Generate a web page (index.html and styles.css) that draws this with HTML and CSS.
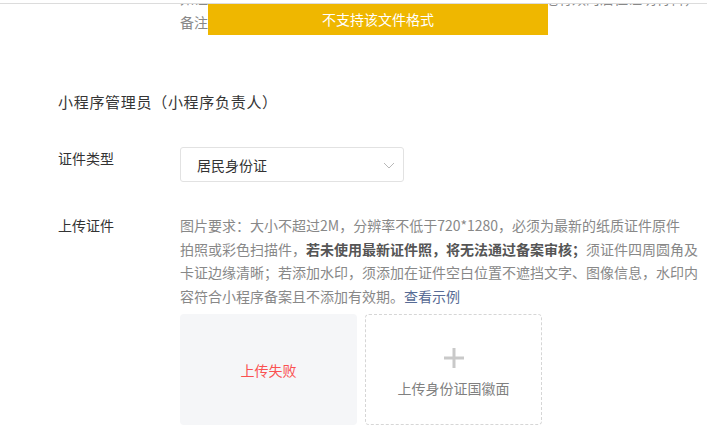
FILE: index.html
```html
<!DOCTYPE html>
<html>
<head>
<meta charset="utf-8">
<link rel="stylesheet" href="styles.css">
</head>
<body>
    <div class="topbar"></div>
    <div class="toast">不支持该文件格式</div>

    <div id="page">
        <p class="note">
            如证件上的地址与实际居住地址不一致，请上传居住证或其他有效的居住证明材料，<br>
            备注：如有其他需要说明的情况请在此处填写补充说明
        </p>

        <h2 class="section-title">小程序管理员（小程序负责人）</h2>

        <div class="form-row">
            <label class="form-label">证件类型</label>
            <div class="form-field">
                <div class="select">
                    <span>居民身份证</span>
                    <svg class="chevron" width="12" height="7" viewBox="0 0 12 7">
                        <path d="M1 1 L6 6 L11 1" fill="none" stroke="#b8b8b8" stroke-width="1" />
                    </svg>
                </div>
            </div>
        </div>

        <div class="form-row upload-row">
            <label class="form-label">上传证件</label>
            <div class="form-field">
                <p class="tips">
                    图片要求：大小不超过2M，分辨率不低于720*1280，必须为最新的纸质证件原件<br>
                    拍照或彩色扫描件，<b>若未使用最新证件照，将无法通过备案审核；</b>须证件四周圆角及<br>
                    卡证边缘清晰；若添加水印，须添加在证件空白位置不遮挡文字、图像信息，水印内<br>
                    容符合小程序备案且不添加有效期。<a href="#" class="link">查看示例</a>
                </p>
                <div class="uploads">
                    <div class="upload-box failed">上传失败</div>
                    <div class="upload-box empty">
                        <svg width="20" height="20" viewBox="0 0 20 20">
                            <rect x="0" y="8.5" width="20" height="3" fill="#c9c9c9" />
                            <rect x="8.5" y="0" width="3" height="20" fill="#c9c9c9" />
                        </svg>
                        <span class="upload-text">上传身份证国徽面</span>
                    </div>
                </div>
            </div>
        </div>
    </div>
</body>
</html>
```

FILE: styles.css
```css
body {
    margin: 0;
    background: #fff;
    font-family: "Noto Sans CJK SC", "Noto Sans", sans-serif;
    color: #333;
    overflow: hidden;
}
.topbar {
    position: fixed;
    top: 0;
    left: 0;
    right: 0;
    height: 3px;
    background: #fff;
    border-bottom: 1px solid #dcdcdc;
    z-index: 2;
}
.toast {
    position: fixed;
    top: 4px;
    left: 208px;
    width: 340px;
    height: 31px;
    line-height: 31px;
    background: #efb700;
    color: #fff;
    font-size: 14px;
    text-align: center;
    z-index: 3;
}
#page {
    padding-left: 58px;
}
.note {
    margin: -13px 0 0 122px;
    font-size: 14px;
    line-height: 23.5px;
    color: #888;
    white-space: nowrap;
}
.section-title {
    margin: 56px 0 0;
    font-size: 15px;
    font-weight: normal;
    letter-spacing: 0.7px;
    line-height: 24px;
    color: #353535;
}
.form-row {
    display: flex;
    margin-top: 33px;
}
.upload-row {
    margin-top: 32px;
}
.form-label {
    width: 122px;
    flex-shrink: 0;
    font-size: 14px;
    line-height: 22px;
    color: #333;
}
.upload-row .form-label {
    line-height: 23.5px;
}
.select {
    height: 33px;
    border: 1px solid #e2e2e2;
    border-radius: 3px;
    display: flex;
    align-items: center;
    justify-content: space-between;
    padding: 0 8px 0 16px;
    width: 198px;
    font-size: 14px;
    color: #333;
}
.chevron {
    margin-top: 1px;
}
.tips {
    margin: 0;
    font-size: 14px;
    line-height: 23.5px;
    color: #888;
    white-space: nowrap;
}
.tips b {
    color: #555;
}
.link {
    color: #576b95;
    text-decoration: none;
}
.uploads {
    display: flex;
    gap: 8px;
    margin-top: 6px;
}
.upload-box {
    width: 177px;
    height: 111px;
    box-sizing: border-box;
    border-radius: 4px;
    font-size: 14px;
}
.failed {
    background: #f5f6f8;
    color: #fa5151;
    display: flex;
    align-items: center;
    justify-content: center;
}
.empty {
    border: 1px dashed #d6d6d6;
    display: flex;
    flex-direction: column;
    align-items: center;
    padding-top: 33px;
}
.upload-text {
    margin-top: 10px;
    line-height: 20px;
    color: #808080;
}
```
